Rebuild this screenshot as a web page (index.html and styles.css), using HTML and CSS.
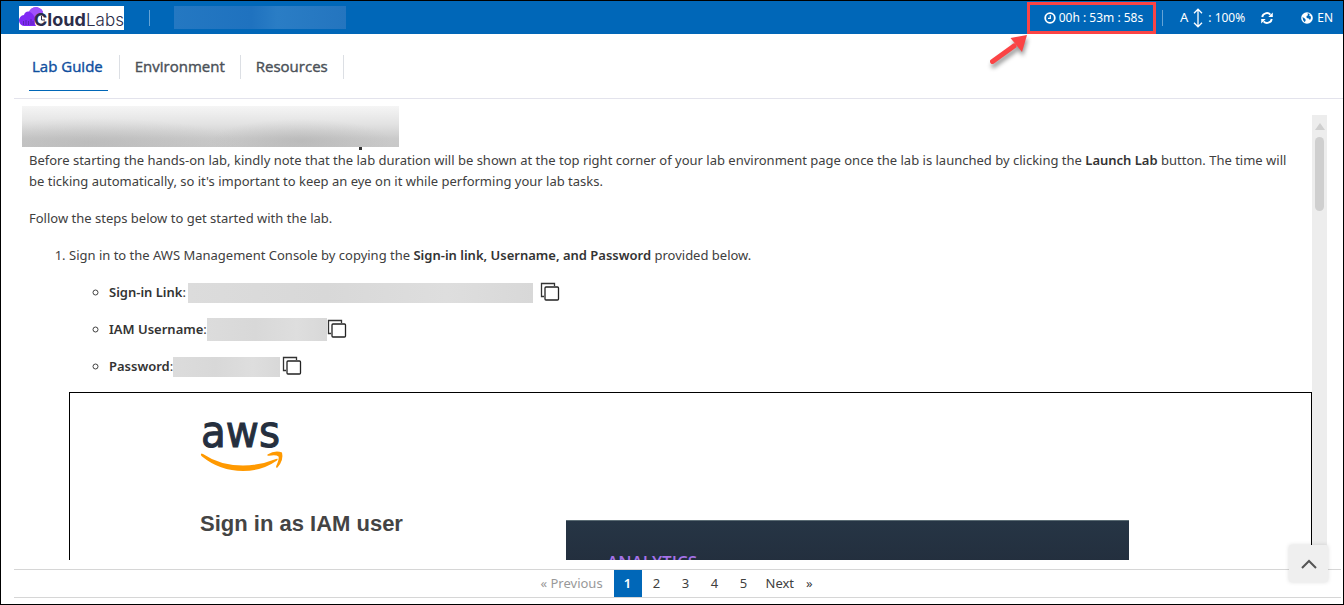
FILE: index.html
```
<!DOCTYPE html>
<html lang="en">
<head>
<meta charset="utf-8">
<title>CloudLabs - Lab Guide</title>
<link rel="stylesheet" href="styles.css">
</head>
<body>
<div class="app">
  <header class="topbar">
    <svg class="brand" width="105" height="24" viewBox="0 0 105 24" role="img" aria-label="CloudLabs">
      <rect width="105" height="24" fill="#fff"/>
      <path d="M6 20a5.500 5.500 0 0 1-1-11Q6 5 10 5.500C12 1.500 16 .5 19 1.500Q23.500 3 24 6.500C18 7.500 15 12 16 18L17 20Z" fill="#8029f5"/>
      <path d="M10 5.500C12 1.500 16 .5 19 1.500Q23.500 3 24 6.500Q18 7.500 15.500 11Q14 7 10 5.500Z" fill="#a052fc"/>
      <path d="M4.500 15v4M7 14v5M9.500 15v4M12 13v6M14 15v4" stroke="#5b22b5"/>
      <path d="M22.500 10v4h3.500" fill="none" stroke="#2b2d4a"/>
      <text x="15" y="20" class="brand-bold">Cloud</text>
      <text x="67" y="20" class="brand-light">Labs</text>
    </svg>
    <span class="divider"></span>
    <span class="lab-name"></span>
    <div class="tools">
      <div class="timer">
        <svg width="12" height="12" viewBox="0 0 12 12"><circle cx="6" cy="6" r="4.800" fill="none" stroke="#fff" stroke-width="1.800"/><path d="M6.300 3.300v3.100H4" fill="none" stroke="#fff" stroke-width="1.200"/></svg>
        <span>00h : 53m : 58s</span>
        <svg class="arrow" width="44" height="36" viewBox="0 0 44 36"><path d="M5.500 28.500 27 13" stroke="#fb4445" stroke-width="5" stroke-linecap="round"/><path d="M40 2 23.500 5l11.500 14Z" fill="#fb4445"/></svg>
      </div>
      <span class="divider small"></span>
      <button class="tool zoom"><span class="letter">A</span><svg width="10" height="20" viewBox="0 0 10 20"><path d="M5 1.500v17M1 5.200 5 1.200l4 4M1 14.800l4 4 4-4" fill="none" stroke="#fff" stroke-width="1.300"/></svg><span>: 100%</span></button>
      <button class="tool refresh" aria-label="Refresh"><svg width="12" height="12" viewBox="0 0 12 12"><path d="M1.200 5A4.800 4.800 0 0 1 9.400 2.600M10.800 7A4.800 4.800 0 0 1 2.600 9.400" fill="none" stroke="#fff" stroke-width="1.900"/><path d="M11.800.5V5H7.300ZM.2 11.500V7h4.500Z" fill="#fff"/></svg></button>
      <button class="tool lang"><svg width="12" height="12" viewBox="0 0 12 12"><circle cx="6" cy="6" r="5.800" fill="#fff"/><path d="M6.500 1.200 8.800 2 8 3.600l1.500.4.5 2-1 2-1.300-1.500-2-.5L5.500 4 7 3.200ZM1.500 5l2.300 1.500 1 1.500-1 2.300Q1.500 8.500 1.500 5Z" fill="#0067b8"/></svg><span>EN</span></button>
    </div>
  </header>

  <nav class="tabs">
    <a href="#guide" class="tab active">Lab Guide</a>
    <a href="#environment" class="tab">Environment</a>
    <a href="#resources" class="tab">Resources</a>
  </nav>

  <main class="guide">
    <article class="content">
      <div class="title-mask"></div>
      <div class="copy">
        <p>Before starting the hands-on lab, kindly note that the lab duration will be shown at the top right corner of your lab environment page once the lab is launched by clicking the <strong>Launch Lab</strong> button. The time will be ticking automatically, so it's important to keep an eye on it while performing your lab tasks.</p>
        <p>Follow the steps below to get started with the lab.</p>
        <ol class="steps">
          <li>Sign in to the AWS Management Console by copying the <strong>Sign-in link, Username, and Password</strong> provided below.
            <ul class="creds">
              <li><div class="cred"><span><strong>Sign-in Link</strong>:</span><span class="mask link"></span><button class="copy-btn" aria-label="Copy sign-in link"><svg width="20" height="20" viewBox="0 0 20 20"><path d="M14.500 4V1.500h-13v13H4" fill="none" stroke="#333" stroke-width="1.300"/><rect x="5" y="5" width="13.500" height="13" rx="1" fill="#fff" stroke="#222" stroke-width="1.300"/></svg></button></div></li>
              <li><div class="cred"><span><strong>IAM Username</strong>:</span><span class="mask user"></span><button class="copy-btn" aria-label="Copy username"><svg width="20" height="20" viewBox="0 0 20 20"><path d="M14.500 4V1.500h-13v13H4" fill="none" stroke="#333" stroke-width="1.300"/><rect x="5" y="5" width="13.500" height="13" rx="1" fill="#fff" stroke="#222" stroke-width="1.300"/></svg></button></div></li>
              <li><div class="cred"><span><strong>Password</strong>:</span><span class="mask pass"></span><button class="copy-btn" aria-label="Copy password"><svg width="20" height="20" viewBox="0 0 20 20"><path d="M14.500 4V1.500h-13v13H4" fill="none" stroke="#333" stroke-width="1.300"/><rect x="5" y="5" width="13.500" height="13" rx="1" fill="#fff" stroke="#222" stroke-width="1.300"/></svg></button></div></li>
            </ul>
          </li>
        </ol>
        <section class="console">
          <div class="signin">
            <svg class="aws" width="86" height="56" viewBox="0 0 86 56" role="img" aria-label="aws">
              <text x="1" y="30" class="aws-word">aws</text>
              <path d="M1.500 36.500Q0 38 2 39.500Q20 54 43 54Q62 54 77 43.500Q79 41 76 42Q60 48.500 43 48.500Q20 48.500 3 37Z" fill="#f90"/>
              <path d="M67.500 37.500Q75 33 82 35.500Q84 43 77.500 50.500Q75.500 51.500 76.200 49Q79.500 41.500 78.500 39.500Q76 37.500 69 38.800Q66.500 39 67.500 37.500Z" fill="#f90"/>
            </svg>
            <h2>Sign in as IAM user</h2>
          </div>
          <div class="promo">ANALYTICS</div>
        </section>
      </div>
    </article>
    <div class="scrollbar"><span class="scroll-up"></span><span class="thumb"></span></div>
  </main>

  <footer class="pager">
    <button class="page prev" disabled>« Previous</button>
    <button class="page current">1</button>
    <button class="page">2</button>
    <button class="page">3</button>
    <button class="page">4</button>
    <button class="page">5</button>
    <button class="page next">Next<span>»</span></button>
  </footer>

  <button class="to-top" aria-label="Back to top"><svg width="18" height="12" viewBox="0 0 18 12"><path d="M2 10 9 3l7 7" fill="none" stroke="#555" stroke-width="2"/></svg></button>
</div>
</body>
</html>
```
FILE: styles.css
```
* { box-sizing: border-box; }
body {
  margin: 0;
  font: 13px/21px "Noto Sans", "Open Sans", sans-serif;
  color: #404040;
  background: #fff;
}
button { font: inherit; color: inherit; background: none; border: 0; padding: 0; }
svg { display: block; flex: none; }
.app {
  position: relative;
  display: flex;
  flex-direction: column;
  height: 100vh;
  border: 1px solid #000;
  overflow: hidden;
}

.topbar {
  display: flex;
  align-items: center;
  flex: none;
  height: 33px;
  padding: 0 10px 0 18px;
  background: #0067b8;
  color: #fff;
}
.brand-bold { font: 700 18px Inter, sans-serif; fill: #2b2d4a; }
.brand-light { font: 300 17px Inter, sans-serif; fill: #2b2d4a; }
.divider { width: 1px; height: 16px; margin: 0 24px 0 25px; background: #65a4d6; }
.divider.small { margin: 0 17px 0 6px; }
.lab-name { width: 172px; height: 23px; background: linear-gradient(90deg, #2478c2, #1f72bf 45%, #2a7dc5 60%, #2475bf); }
.tools { display: flex; align-items: center; margin-left: auto; font-size: 12px; }
.timer {
  position: relative;
  display: flex;
  align-items: center;
  justify-content: center;
  gap: 3px;
  width: 129px;
  height: 32px;
  padding-left: 4px;
  border: 3px solid #fb4445;
}
.arrow { position: absolute; left: -43px; top: 28px; filter: drop-shadow(1px 4px 2px rgba(0, 0, 0, .4)); }
.tool { display: flex; align-items: center; gap: 5px; }
.tool.lang { gap: 4px; }
.letter { font-size: 13px; }
.refresh { margin: 0 28px 0 16px; }

.tabs {
  display: flex;
  flex: none;
  height: 65px;
  margin-left: 13px;
  padding: 21px 0 7px 2px;
  border-bottom: 1px solid #e3e3ec;
  font-family: "Open Sans", "Noto Sans", sans-serif;
  font-size: 15px;
  -webkit-text-stroke: 0.4px currentColor;
}
.tab {
  position: relative;
  height: 24px;
  padding: 0 15px;
  border-right: 1px solid #dcdfe4;
  line-height: 23px;
  color: #4b5158;
  text-decoration: none;
}
.tab.active { padding: 0 16px; color: #0f4f9e; }
.tab.active::after {
  content: "";
  position: absolute;
  left: 13px;
  right: 11px;
  top: 35px;
  height: 1px;
  background: #0067b8;
}

.guide {
  display: flex;
  flex: 1;
  min-height: 0;
  padding: 7px 16px 0 21px;
}
.content { flex: 1; min-width: 0; overflow: hidden; }
.title-mask {
  position: relative;
  width: 377px;
  height: 41px;
  background: radial-gradient(ellipse 90px 22px at 74% 85%, rgba(160, 160, 160, .35), transparent), radial-gradient(ellipse 150px 25px at 18% 90%, rgba(170, 170, 170, .4), transparent), linear-gradient(#f5f5f5, #e2e2e2 45%, #cacaca 80%, #c8c8c8);
}
.title-mask::after {
  content: "";
  position: absolute;
  right: 37px;
  top: 100%;
  width: 3px;
  height: 3px;
  background: #333;
}
.copy { padding-left: 7px; }
p { margin: 0 0 16px; padding: 3px 10px 0 0; }
p + p { padding-top: 0; }
strong { font-weight: 600; color: #333; }
.steps { margin: 0; padding-left: 40px; }
.creds { margin: 16px 0 15px; padding-left: 40px; list-style: circle; }
.creds li { height: 21px; margin-bottom: 16px; }
.creds li:last-child { margin-bottom: 15px; }
.cred { display: flex; align-items: center; height: 21px; }
.copy-btn { padding-bottom: 2px; }
.mask { height: 20px; background: linear-gradient(90deg, #dcdcdc, #d8d8d8 40%, #dedede 75%, #d8d8d8); }
.link { width: 345px; margin: 0 7px 0 2px; }
.user { width: 120px; height: 23px; }
.pass { width: 107px; margin-right: 2px; }
.console {
  display: flex;
  align-items: flex-start;
  height: 400px;
  margin-left: 40px;
  border: 1px solid #000;
}
.signin { width: 366px; margin-left: 130px; padding-top: 24px; }
.aws { overflow: visible; }
.aws-word { font: 45px "DejaVu Sans Condensed", "DejaVu Sans", sans-serif; fill: #252f3e; stroke: #252f3e; stroke-width: 1px; }
h2 { margin: 38px 0 0; font: 700 22px/26px "Liberation Sans", Arial, sans-serif; color: #444; }
.promo {
  width: 563px;
  height: 240px;
  margin-top: 127px;
  padding: 29px 41px;
  border-top: 1px solid #5a6b73;
  background: linear-gradient(#263545, #232f3e 40px);
  color: #a572e8;
  font: 600 17px/24px "Open Sans", sans-serif;
}
.scrollbar {
  display: flex;
  flex-direction: column;
  align-items: center;
  width: 15px;
  margin-top: 9px;
  padding-top: 8px;
  gap: 7px;
  background: #ededed;
}
.scroll-up { border: solid transparent; border-width: 0 5px 7px; border-bottom-color: #cfcfcf; }
.thumb { width: 9px; height: 74px; border-radius: 5px; background: #cfcfcf; }

.pager {
  display: flex;
  justify-content: center;
  flex: none;
  margin: 9px 2px 6px 13px;
  border: solid #d6d6d6;
  border-width: 1px 0;
}
.page { width: 28px; height: 27px; }
.page + .page { margin-left: 1px; }
.page.prev { width: 80px; padding-left: 8px; text-align: left; color: #999; }
.page.current { background: #0067b8; color: #fff; font-weight: 600; }
.page.next { display: flex; align-items: center; width: 64px; padding-left: 7px; gap: 12px; }
.to-top {
  position: absolute;
  right: 15px;
  bottom: 22px;
  display: grid;
  place-items: center;
  width: 39px;
  height: 37px;
  border-radius: 2px;
  background: #efefef;
  box-shadow: 0 0 4px rgba(0, 0, 0, .15);
}
```
